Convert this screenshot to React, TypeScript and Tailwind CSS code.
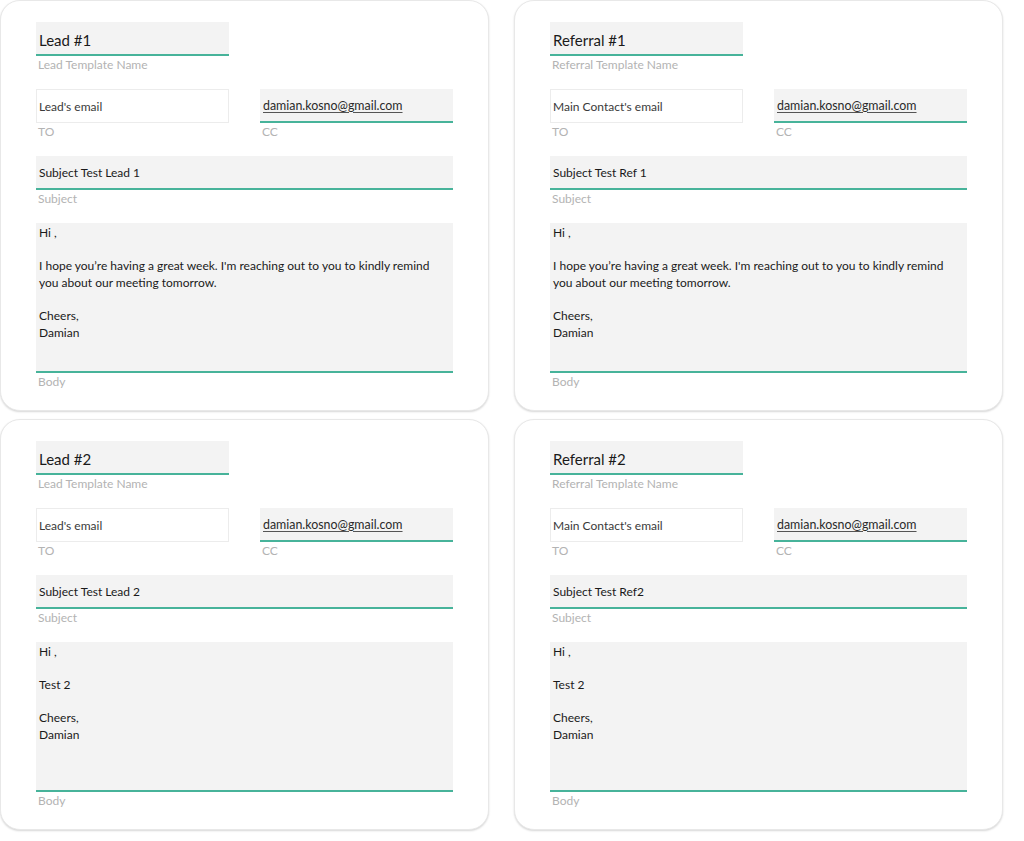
import React from "react";

type Card = {
  title: string;
  nameLabel: string;
  to: string;
  subject: string;
  body: string[];
};

const cards: Card[] = [
  {
    title: "Lead #1",
    nameLabel: "Lead Template Name",
    to: "Lead's email",
    subject: "Subject Test Lead 1",
    body: [
      "Hi ,",
      "",
      "I hope you’re having a great week. I'm reaching out to you to kindly remind you about our meeting tomorrow.",
      "",
      "Cheers,",
      "Damian",
    ],
  },
  {
    title: "Referral #1",
    nameLabel: "Referral Template Name",
    to: "Main Contact's email",
    subject: "Subject Test Ref 1",
    body: [
      "Hi ,",
      "",
      "I hope you’re having a great week. I'm reaching out to you to kindly remind you about our meeting tomorrow.",
      "",
      "Cheers,",
      "Damian",
    ],
  },
  {
    title: "Lead #2",
    nameLabel: "Lead Template Name",
    to: "Lead's email",
    subject: "Subject Test Lead 2",
    body: ["Hi ,", "", "Test 2", "", "Cheers,", "Damian"],
  },
  {
    title: "Referral #2",
    nameLabel: "Referral Template Name",
    to: "Main Contact's email",
    subject: "Subject Test Ref2",
    body: ["Hi ,", "", "Test 2", "", "Cheers,", "Damian"],
  },
];

function Label({ children }: { children: React.ReactNode }) {
  return (
    <div className="h-[16px] mt-[1px] pl-[2px] text-[12px] leading-[16px] text-[#b3b3b3]">
      {children}
    </div>
  );
}

function TemplateCard({ c }: { c: Card }) {
  return (
    <div className="w-[489px] h-[411px] rounded-[20px] border border-[#e8e8e8] bg-white shadow-[0_1px_2px_rgba(0,0,0,0.16)] pt-[21px] pl-[35px]">
      <div className="w-[193px] h-[34px] bg-[#f3f3f3] border-b-2 border-[#47b39a] pl-[3px] pt-[5px] flex items-center text-[15px] text-[#1a1a1a]">
        {c.title}
      </div>
      <Label>{c.nameLabel}</Label>
      <div className="flex gap-[31px] mt-[16px]">
        <div>
          <div className="w-[193px] h-[34px] border border-[#ececec] pl-[2px] pt-[2px] flex items-center text-[12px] text-[#3a3a3a]">
            {c.to}
          </div>
          <Label>TO</Label>
        </div>
        <div>
          <div className="w-[193px] h-[34px] bg-[#f3f3f3] border-b-2 border-[#47b39a] pl-[3px] pt-[2px] flex items-center text-[12.4px] text-[#2a2a2a] underline underline-offset-2 decoration-[#555]">
            damian.kosno@gmail.com
          </div>
          <Label>CC</Label>
        </div>
      </div>
      <div className="mt-[16px] w-[417px] h-[34px] bg-[#f3f3f3] border-b-2 border-[#47b39a] pl-[3px] pt-[2px] flex items-center text-[12px] text-[#1a1a1a]">
        {c.subject}
      </div>
      <Label>Subject</Label>
      <div className="mt-[16px] w-[417px] h-[150px] bg-[#f3f3f3] border-b-2 border-[#47b39a] pl-[3px] pr-[8px] pt-[2px] text-[12px] leading-[16.6px] text-[#1a1a1a]">
        {c.body.map((l, i) => (
          <div key={i} className="min-h-[16.6px]">
            {l}
          </div>
        ))}
      </div>
      <Label>Body</Label>
    </div>
  );
}

export default function App() {
  return (
    <div
      className="w-[1024px] h-[841px] bg-white overflow-hidden"
      style={{ fontFamily: "Lato, 'Open Sans', sans-serif" }}
    >
      <div className="grid grid-cols-[489px_489px] gap-x-[25px] gap-y-[8px]">
        {cards.map((c, i) => (
          <TemplateCard key={i} c={c} />
        ))}
      </div>
    </div>
  );
}
